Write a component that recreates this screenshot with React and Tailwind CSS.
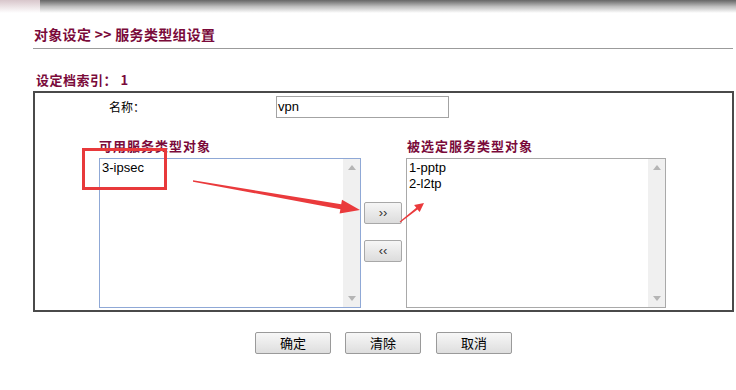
import React from "react";

const cjk = { fontFamily: '"Noto Sans CJK SC", "Liberation Sans", sans-serif' };
const latin = { fontFamily: '"Liberation Sans", Arial, "Noto Sans CJK SC", sans-serif' };

function ListBox({ items, borderClass }) {
  return (
    <div className={`flex h-[150px] w-full border ${borderClass} bg-white`}>
      <div className="flex-1 pl-[2px] pt-[1px] text-[13px] leading-[16px] text-black" style={latin}>
        {items.map((t) => (
          <div key={t}>{t}</div>
        ))}
      </div>
      <div className="flex w-[17px] flex-col items-center justify-between bg-[#f0f0f0] py-[6px]">
        <svg width="8" height="5" viewBox="0 0 8 5"><path d="M4 0 L8 5 L0 5 Z" fill="#b5b5b5" /></svg>
        <svg width="8" height="5" viewBox="0 0 8 5"><path d="M0 0 L8 0 L4 5 Z" fill="#b5b5b5" /></svg>
      </div>
    </div>
  );
}

function SmallBtn({ children }) {
  return (
    <button className="flex h-[22px] w-[38px] items-center justify-center rounded-[2px] border border-[#a8a8a8] bg-gradient-to-b from-[#f6f6f6] to-[#dcdcdc] text-[13px] text-[#333]" style={latin}>
      {children}
    </button>
  );
}

function BigBtn({ children }) {
  return (
    <button className="flex h-[22px] w-[76px] items-center justify-center rounded-[2px] border border-[#9a9a9a] bg-gradient-to-b from-[#f7f7f7] to-[#dedede] text-[13px] text-black" style={cjk}>
      {children}
    </button>
  );
}

export default function App() {
  return (
    <div className="relative h-[390px] w-[736px] overflow-hidden bg-white">
      <div className="flex h-[13px]">
        <div className="w-[40px] bg-gradient-to-b from-[#d8c6cb] to-white" />
        <div className="flex-1 bg-gradient-to-b from-[#666666] via-[#bdbdbd] to-white" />
      </div>

      <div className="ml-[34px] mt-[13px] text-[14px] font-bold leading-[16px] tracking-[0.3px] text-[#7a0a3a]" style={cjk}>
        对象设定 &gt;&gt; 服务类型组设置
      </div>
      <div className="ml-[33px] mt-[6px] w-[700px] border-t border-[#9b9b9b]" />

      <div className="ml-[36px] mt-[23px] text-[13px] font-bold leading-[16px] tracking-[0.5px] text-[#7a0a3a]" style={cjk}>
        设定档索引： 1
      </div>

      <div className="ml-[33px] mt-[3px] h-[221px] w-[701px] border-2 border-[#4a4a4a]">
        <div className="flex items-center pt-[3px]">
          <div className="ml-[74px] w-[167px] text-[12px] text-black" style={cjk}>名称：</div>
          <div className="flex h-[22px] w-[173px] items-center border border-[#a3a3a3] px-[1px] text-[13px] text-black" style={latin}>
            vpn
          </div>
        </div>

        <div className="mt-[20px] flex">
          <div className="ml-[64px] flex w-[262px] flex-col">
            <div className="mb-[4px] text-[13px] font-bold leading-[16px] tracking-[1px] text-[#7a0a3a]" style={cjk}>可用服务类型对象</div>
            <ListBox items={["3-ipsec"]} borderClass="border-[#8fa8d6]" />
          </div>
          <div className="ml-[3px] flex flex-col gap-[16px] pt-[64px]">
            <SmallBtn>››</SmallBtn>
            <SmallBtn>‹‹</SmallBtn>
          </div>
          <div className="ml-[4px] flex w-[260px] flex-col">
            <div className="mb-[4px] pl-[1px] text-[13px] font-bold leading-[16px] tracking-[1px] text-[#7a0a3a]" style={cjk}>被选定服务类型对象</div>
            <ListBox items={["1-pptp", "2-l2tp"]} borderClass="border-[#a9a9a9]" />
          </div>
        </div>
      </div>

      <div className="mt-[20px] flex pl-[255px]">
        <BigBtn>确定</BigBtn>
        <div className="w-[14px]" />
        <BigBtn>清除</BigBtn>
        <div className="w-[15px]" />
        <BigBtn>取消</BigBtn>
      </div>

      <div className="pointer-events-none absolute left-[82px] top-[148px] h-[42px] w-[85px] border-[3px] border-[#e8393b]" />
      <svg className="pointer-events-none absolute left-0 top-0" width="736" height="390" viewBox="0 0 736 390">
        <polygon points="193,180.3 341.2,204.2 342,199.8 360,210 339.6,213.6 340.4,209.2 193,181.7" fill="#ea3a3c" />
        <polygon points="399.7,221.6 416.3,207.8 414.1,205.1 424,203 419.7,212.1 417.5,209.4 400.3,222.4" fill="#ea3a3c" />
      </svg>
    </div>
  );
}
